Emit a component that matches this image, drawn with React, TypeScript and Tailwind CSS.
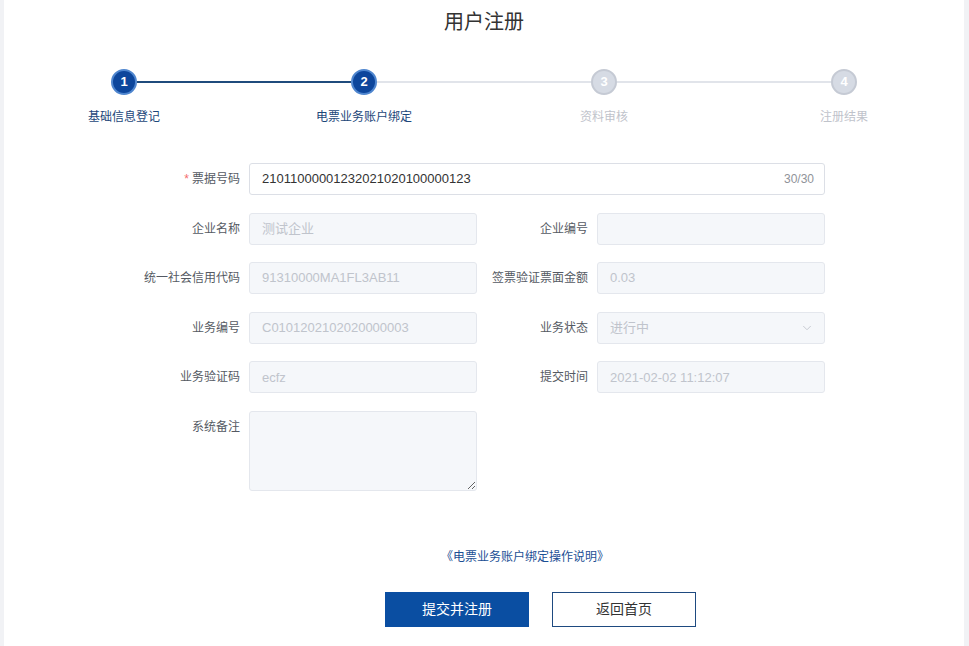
import { ChevronDown } from 'lucide-react';

const font = { fontFamily: '"Liberation Sans", "Noto Sans CJK SC", sans-serif' };

type Step = { no: number; title: string; done: boolean };

const steps: Step[] = [
  { no: 1, title: '基础信息登记', done: true },
  { no: 2, title: '电票业务账户绑定', done: true },
  { no: 3, title: '资料审核', done: false },
  { no: 4, title: '注册结果', done: false },
];

// Steps bar
function Steps() {
  return (
    <div className="flex mt-[33px]">
      {steps.map((s, i) => {
        const leftColor =
          i === 0 ? 'bg-transparent' : steps[i].done ? 'bg-[#1f4b7c]' : 'bg-[#e1e4ea]';
        const rightColor =
          i === steps.length - 1
            ? 'bg-transparent'
            : steps[i + 1].done
              ? 'bg-[#1f4b7c]'
              : 'bg-[#e1e4ea]';
        return (
          <div key={s.no} className="flex-1 flex flex-col items-center">
            <div className="w-full flex items-center h-[26px]">
              <div className={`flex-1 h-[2px] ${leftColor}`} />
              <div
                className={
                  s.done
                    ? 'w-[26px] h-[26px] rounded-full bg-[#0d469c] border-2 border-[#4f86cf] text-white flex items-center justify-center text-[13px] font-bold'
                    : 'w-[26px] h-[26px] rounded-full bg-[#d6dbe4] border-2 border-[#c5cad4] text-white flex items-center justify-center text-[13px] font-bold'
                }
              >
                {s.no}
              </div>
              <div className={`flex-1 h-[2px] ${rightColor}`} />
            </div>
            <div
              className={`mt-[13px] text-[12px] leading-[18px] ${s.done ? 'text-[#1d477a]' : 'text-[#bfc3cb]'}`}
            >
              {s.title}
            </div>
          </div>
        );
      })}
    </div>
  );
}

function Label({ text, required }: { text: string; required?: boolean }) {
  return (
    <div className="w-[120px] shrink-0 pr-[9px] text-right text-[12px] leading-[32px] text-[#555a63]">
      {required && <span className="text-[#f56c6c] mr-[3px]">*</span>}
      {text}
    </div>
  );
}

function DisabledInput({ value, select }: { value: string; select?: boolean }) {
  return (
    <div className="w-[228px] h-[32px] rounded-[3px] border border-[#e4e7ed] bg-[#f5f7fa] px-[12px] flex items-center justify-between text-[13px] text-[#c0c4cc]">
      <span>{value}</span>
      {select && <ChevronDown size={14} strokeWidth={1.5} className="text-[#c0c4cc] -mr-[2px]" />}
    </div>
  );
}

function Field({ label, value, select }: { label: string; value: string; select?: boolean }) {
  return (
    <div className="flex w-[348px]">
      <Label text={label} />
      <DisabledInput value={value} select={select} />
    </div>
  );
}

export default function App() {
  return (
    <div className="min-h-[646px] bg-[#f1f2f5] pl-[4px] pr-[5px]" style={font}>
      <div className="bg-white min-h-[646px] pt-[8px]">
        <h1 className="text-center text-[20px] leading-[28px] text-[#333]">用户注册</h1>

        <Steps />

        {/* Form */}
        <div className="ml-[125px] w-[696px] mt-[37px] flex flex-col gap-[17.6px]">
          <div className="flex">
            <Label text="票据号码" required />
            <div className="w-[576px] h-[32px] rounded-[3px] border border-[#dcdfe6] bg-white pl-[12px] pr-[10px] flex items-center justify-between">
              <span className="text-[13px] text-[#333]">21011000001232021020100000123</span>
              <span className="text-[12px] text-[#909399]">30/30</span>
            </div>
          </div>
          <div className="flex">
            <Field label="企业名称" value="测试企业" />
            <Field label="企业编号" value="" />
          </div>
          <div className="flex">
            <Field label="统一社会信用代码" value="91310000MA1FL3AB11" />
            <Field label="签票验证票面金额" value="0.03" />
          </div>
          <div className="flex">
            <Field label="业务编号" value="C0101202102020000003" />
            <Field label="业务状态" value="进行中" select />
          </div>
          <div className="flex">
            <Field label="业务验证码" value="ecfz" />
            <Field label="提交时间" value="2021-02-02 11:12:07" />
          </div>
          <div className="flex">
            <Label text="系统备注" />
            <textarea
              readOnly
              className="w-[228px] h-[80px] rounded-[3px] border border-[#e4e7ed] bg-[#f5f7fa] px-[12px] py-[6px] text-[13px] outline-none"
            />
          </div>
        </div>

        <div className="ml-[241px] w-[560px] text-center mt-[57px] text-[12px] leading-[18px] text-[#1c4f95]">
          《电票业务账户绑定操作说明》
        </div>

        <div className="flex gap-[23px] ml-[381px] mt-[26px] pb-[18px]">
          <button className="w-[144px] h-[35px] bg-[#0a4ea2] text-white text-[14px]">提交并注册</button>
          <button className="w-[144px] h-[35px] border border-[#1e4a80] bg-white text-[#333] text-[14px]">
            返回首页
          </button>
        </div>
      </div>
    </div>
  );
}
